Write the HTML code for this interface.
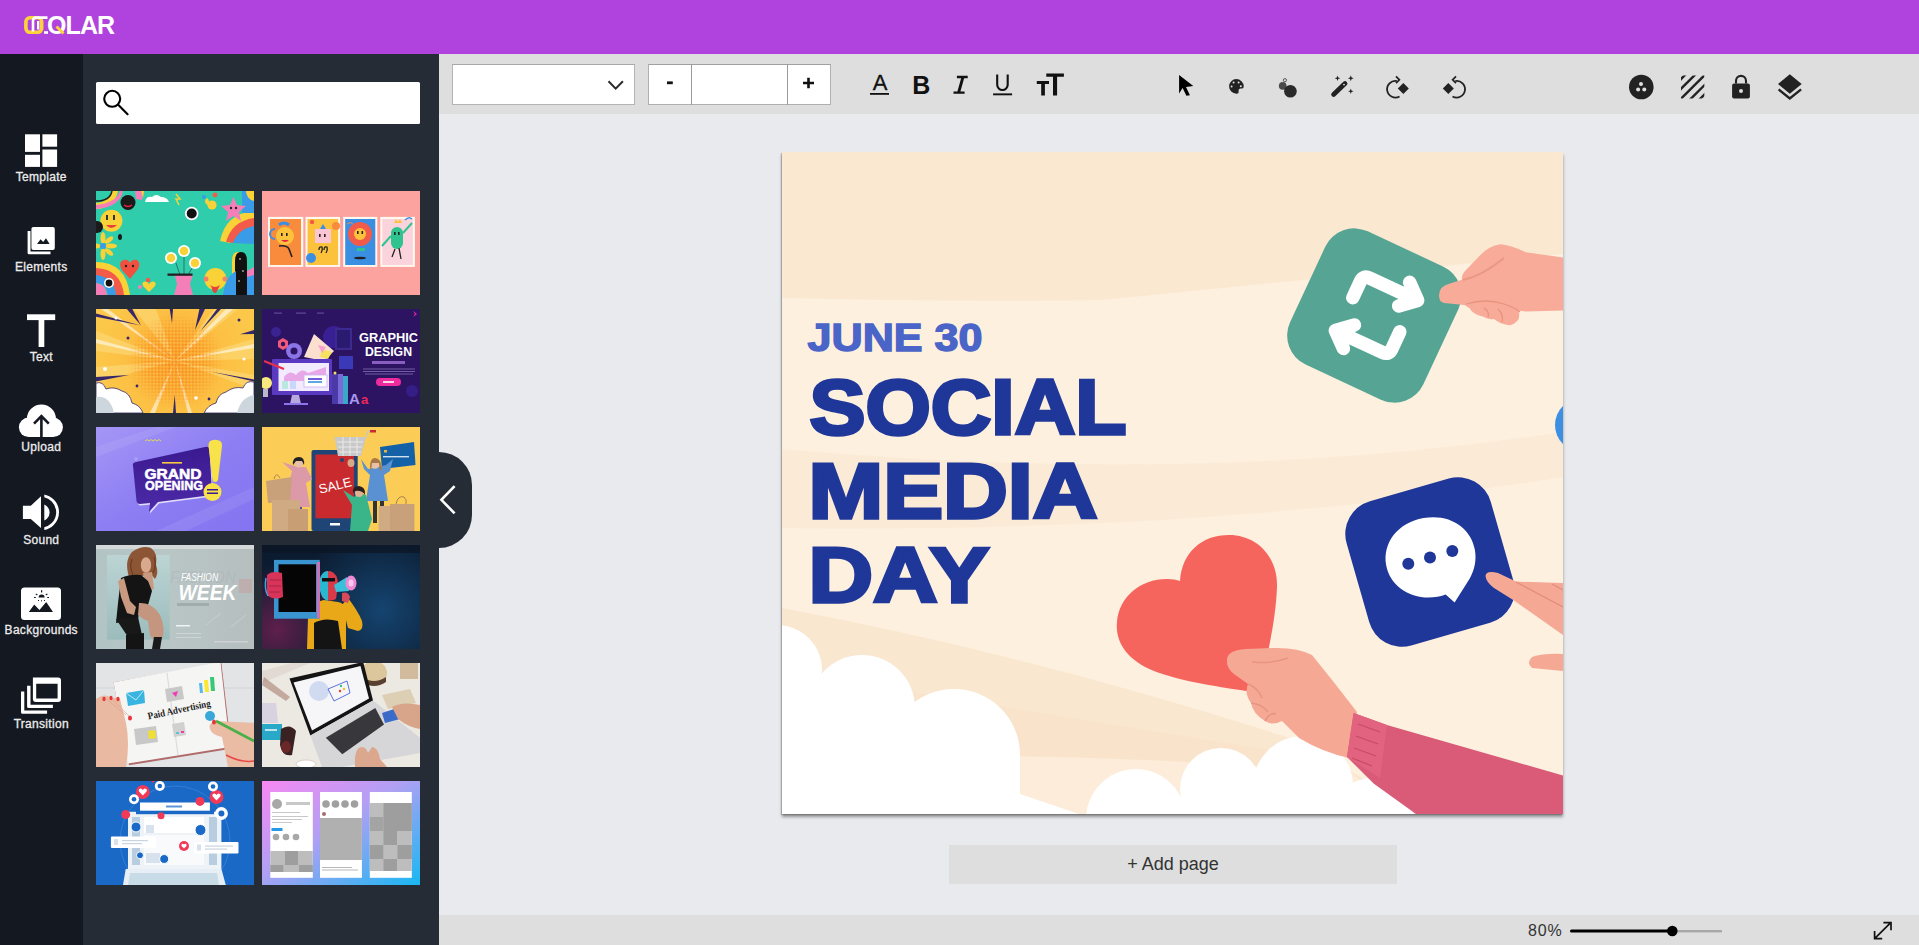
<!DOCTYPE html>
<html><head><meta charset="utf-8">
<style>
*{box-sizing:border-box;margin:0;padding:0}
html,body{width:1919px;height:945px;overflow:hidden;background:#e9eaee;font-family:"Liberation Sans",sans-serif}
.abs{position:absolute}
#hdr{left:0;top:0;width:1919px;height:54px;background:#b043de}
#side{left:0;top:54px;width:83px;height:891px;background:#141820}
#panel{left:83px;top:54px;width:356px;height:891px;background:#262c35}
#tool{left:439px;top:54px;width:1480px;height:60px;background:#dedede}
#bot{left:439px;top:915px;width:1480px;height:30px;background:#dedede}
.lbl{position:absolute;color:#ececec;-webkit-text-stroke:0.3px #ececec;font-size:12px;letter-spacing:0.3px;width:82.5px;text-align:center;left:0;line-height:14px}
#search{left:96px;top:82px;width:324px;height:42px;background:#fff;border-radius:1.5px}
.th{position:absolute;width:158px;height:104px;overflow:hidden}
#tab{left:439px;top:452px;width:33px;height:96px;background:#262c35;border-radius:0 33px 33px 0}
#canvas{left:782px;top:152px;width:781px;height:662px;background:#fae8d2;overflow:hidden;box-shadow:-1px 1px 1px rgba(0,0,0,.18),0 3px 3px rgba(0,0,0,.38)}
#addp{left:949px;top:845px;width:448px;height:39px;background:#dedede;color:#333;font-size:18px;text-align:center;line-height:39px}
</style></head><body>
<div id="hdr" class="abs"></div>
<div id="side" class="abs"></div>
<svg class="abs" style="left:20px;top:10px" width="100" height="30" viewBox="0 0 100 30">
<rect x="5.9" y="7.8" width="15.8" height="14.5" rx="4" ry="4" fill="none" stroke="#fcd33a" stroke-width="3.6"/>
<path d="M13 21.5 V10.5 Q13 7.6 16 7.6 H27.5" fill="none" stroke="#fff" stroke-width="2.6"/>
<path d="M18.2 11 V19.5" fill="none" stroke="#fff" stroke-width="2.4"/>
<rect x="24" y="21.2" width="4" height="2.6" fill="#fff"/>
</svg>
<div class="abs" id="logotxt" style="left:47px;top:11px;font-size:25px;font-weight:bold;color:#fff;line-height:28px;letter-spacing:-0.9px">OLAR</div>
<svg class="abs" style="left:55px;top:25px" width="12" height="10"><path d="M1.5 1.5 L8.5 8.5" stroke="#fcd33a" stroke-width="2.8"/></svg>

<div id="panel" class="abs"></div>
<div id="tool" class="abs"></div>
<div id="bot" class="abs"></div>
<div class="abs" style="left:452px;top:64px;width:183px;height:41px;background:#fff;border:1px solid #b4b4b4;border-top-color:#a8a8a8"></div>
<div class="abs" style="left:648px;top:64px;width:183px;height:41px;background:#fff;border:1px solid #b0b0b0;border-top-color:#a0a0a0"></div>
<div class="abs" style="left:691px;top:64px;width:1px;height:41px;background:#9a9a9a"></div>
<div class="abs" style="left:787px;top:64px;width:1px;height:41px;background:#9a9a9a"></div>
<svg class="abs" style="left:439px;top:54px" width="1480" height="60" viewBox="439 54 1480 60">
<path d="M608.5 81.2 L615.7 88.6 L622.9 81.2" fill="none" stroke="#2a2a2a" stroke-width="2"/>
<rect x="667" y="81.4" width="5.8" height="2.8" fill="#111"/>
<path d="M803 83 H814 M808.5 77.7 V88.3" stroke="#111" stroke-width="2.6"/>
<text x="872.8" y="89.6" font-family="Liberation Sans" font-size="22" fill="#111" stroke="#111" stroke-width="0.3">A</text>
<rect x="870" y="93" width="19" height="1.8" fill="#111"/>
<text x="912.3" y="93.8" font-family="Liberation Sans" font-weight="bold" font-size="25" fill="#111">B</text>
<path d="M956.9 75.8 H967.7 V78.2 H956.9 Z M953.5 91.4 H964.6 V93.7 H953.5 Z M961.2 78 L964.2 78 L960.4 91.6 L957.4 91.6 Z" fill="#111"/>
<path d="M997.2 74.4 V84.8 A5.25 5.25 0 0 0 1007.7 84.8 V74.4" fill="none" stroke="#111" stroke-width="2.1"/>
<rect x="993.1" y="93.4" width="19" height="1.9" fill="#111"/>
<path d="M1036.8 80.9 H1049 V83.9 H1044.9 V95.4 H1041.2 V83.9 H1036.8 Z" fill="#111"/>
<path d="M1046.3 73.4 H1063.9 V76.8 H1057.1 V95.4 H1053 V76.8 H1046.3 Z" fill="#111"/>
<path d="M1179.1 74.9 L1193.3 85.9 L1186 87.1 L1189.9 95.2 L1186.4 95.8 L1182.6 88 L1179.1 93.5 Z" fill="#000"/>
<g fill="#222">
<path d="M1236.4 79.1 A7.3 7.3 0 0 0 1236.4 93.7 Q1239 93.7 1238.6 91.2 Q1238.3 88.5 1241 88.6 L1242.2 88.6 Q1243.7 88.6 1243.7 86.2 A7.3 7.3 0 0 0 1236.4 79.1 Z"/>
</g>
<g fill="#dedede"><circle cx="1233.6" cy="82.6" r="1"/><circle cx="1238.6" cy="82.4" r="1"/><circle cx="1231.6" cy="86.6" r="1"/><circle cx="1240.8" cy="86.2" r="1"/></g>
<circle cx="1282.7" cy="85.9" r="3.8" fill="#4a4a4a"/>
<circle cx="1284.9" cy="80.2" r="1.6" fill="none" stroke="#555" stroke-width="1"/>
<circle cx="1290.4" cy="91.3" r="6.3" fill="#2a2a2a"/>
<path d="M1333.6 94.4 L1345 83.6" stroke="#222" stroke-width="4.8" stroke-linecap="round"/>
<circle cx="1344" cy="84.6" r="0.9" fill="#dedede"/>
<g fill="#222">
<path d="M1337.5 75.4 L1338.2 77.5 L1340.3 78.2 L1338.2 78.9 L1337.5 81 L1336.8 78.9 L1334.7 78.2 L1336.8 77.5 Z"/>
<path d="M1350.8 75.2 L1351.6 77.4 L1353.8 78.2 L1351.6 79 L1350.8 81.2 L1350 79 L1347.8 78.2 L1350 77.4 Z"/>
<path d="M1350.8 88.6 L1351.5 90.6 L1353.5 91.3 L1351.5 92 L1350.8 94 L1350.1 92 L1348.1 91.3 L1350.1 90.6 Z"/>
</g>
<path d="M1396.84 81.08 A8.3 8.3 0 1 0 1399.55 96.44" fill="none" stroke="#222" stroke-width="1.8"/>
<path d="M1396 76.4 L1399.4 79.8 L1396 83.2" fill="none" stroke="#222" stroke-width="1.7"/>
<path d="M1403.3 82.9 L1408.8 88.4 L1403.3 93.9 L1397.8 88.4 Z" fill="#222"/>
<path d="M1455.26 81.08 A8.3 8.3 0 1 1 1452.55 96.44" fill="none" stroke="#222" stroke-width="1.8"/>
<path d="M1456 76.4 L1452.6 79.8 L1456 83.2" fill="none" stroke="#222" stroke-width="1.7"/>
<path d="M1448.3 82.9 L1453.8 88.4 L1448.3 93.9 L1442.8 88.4 Z" fill="#222"/>
<circle cx="1641.3" cy="87" r="12.3" fill="#222"/>
<g fill="#dedede"><circle cx="1641" cy="84.1" r="2"/><circle cx="1638.1" cy="89.6" r="2"/><circle cx="1644.3" cy="89.6" r="2"/></g>
<clipPath id="stc"><rect x="1681" y="75.5" width="23.3" height="22.9"/></clipPath>
<g clip-path="url(#stc)" stroke="#222" stroke-width="2.4">
<path d="M1670 90 L1690 70"/><path d="M1670 99.8 L1700 69.8"/><path d="M1670 109.7 L1710 69.7"/><path d="M1680 109.6 L1710 79.6"/><path d="M1690 109 L1710 89"/>
</g>
<path d="M1736 83.5 V80.9 A5 5 0 0 1 1746 80.9 V83.5" fill="none" stroke="#222" stroke-width="2.1"/>
<rect x="1732.1" y="83.5" width="17.8" height="14.9" rx="2" fill="#222"/>
<circle cx="1741" cy="91" r="2" fill="#dedede"/>
<path d="M1789.8 74.3 L1801.7 84.1 L1789.8 93.8 L1778 84.1 Z" fill="#222"/>
<path d="M1778.6 89.4 L1789.8 98.4 L1801.1 89.4" fill="none" stroke="#222" stroke-width="2.4"/>
</svg>

<div id="search" class="abs"></div>

<svg class="abs" style="left:0;top:0" width="83" height="945" viewBox="0 0 83 945">
<g fill="#fff">
<rect x="25" y="134.3" width="15" height="17.6"/>
<rect x="25" y="154.8" width="15" height="12.1"/>
<rect x="42.4" y="134.3" width="14.7" height="12.4"/>
<rect x="42.4" y="149.5" width="14.7" height="17.4"/>
<rect x="31.4" y="227" width="23.4" height="23" rx="2"/>
<path d="M27.6 231 H30.5 V251.4 H50.5 V254.3 H29 Q27.6 254.3 27.6 252.9 Z"/>
<rect x="27" y="314.3" width="28.2" height="5.8"/>
<rect x="38.6" y="319" width="5.7" height="28"/>
<circle cx="41.4" cy="419" r="14.6"/>
<circle cx="28.6" cy="427.3" r="9.7"/>
<circle cx="53.2" cy="427.3" r="9.7"/>
<rect x="28.6" y="420" width="24.6" height="17"/>
<path d="M22.9 505.7 H30.8 L41 496.2 V528.1 L30.8 519 H22.9 Z"/>
<rect x="21" y="587.6" width="40" height="32.4" rx="3.5"/>
<path d="M32.9 677.6 H58 Q61 677.6 61 680.6 V698.9 Q61 701.9 58 701.9 H35.9 Q32.9 701.9 32.9 698.9 Z M36.2 683.8 V698.6 H57.6 V683.8 Z" fill-rule="evenodd"/>
<path d="M27.1 685.7 H30.5 V704.8 H52.9 V708.1 H28.6 Q27.1 708.1 27.1 706.6 Z"/>
<path d="M21 691.4 H24.3 V710.5 H47.1 V713.8 H22.5 Q21 713.8 21 712.3 Z"/>
</g>
<path d="M37 244 L40.6 239.3 L43.2 242 L46 238.2 L49.6 244 Z" fill="#141820"/>
<path d="M41.4 438 V417.5 M34 423.6 L41.4 416.2 L48.8 423.6" stroke="#141820" stroke-width="2.6" fill="none" stroke-linejoin="miter"/>
<clipPath id="wv"><rect x="44.3" y="480" width="30" height="60"/></clipPath>
<g clip-path="url(#wv)" fill="#fff">
<circle cx="41" cy="512.5" r="8.6"/>
<circle cx="41" cy="512.3" r="16.6" fill="none" stroke="#fff" stroke-width="2.8"/>
</g>
<g fill="#141820">
<path d="M29 612 L34.3 604.8 L39.5 612 Z"/>
<path d="M37.8 612 L46.2 601.9 L53 612 Z"/>
<path d="M29 612 L34.3 604.8 L41.5 612 Z"/>
<path d="M38.6 597.4 A3 3 0 0 1 44.6 597.4 Z"/>
<rect x="41" y="590.2" width="1.2" height="2.2"/>
<rect x="35.6" y="593.9" width="2" height="1.1" transform="rotate(35 36.6 594.4)"/>
<rect x="45.6" y="593.9" width="2" height="1.1" transform="rotate(-35 46.6 594.4)"/>
<rect x="34" y="597" width="1.8" height="1"/>
<rect x="47.2" y="597" width="1.8" height="1"/>
<rect x="38" y="600" width="1" height="1"/>
<rect x="41" y="600.3" width="1" height="1"/>
<rect x="44" y="600" width="1" height="1"/>
</g>
</svg>
<div class="lbl" style="top:169.8px">Template</div>
<div class="lbl" style="top:259.8px">Elements</div>
<div class="lbl" style="top:350.2px">Text</div>
<div class="lbl" style="top:439.8px">Upload</div>
<div class="lbl" style="top:532.8px">Sound</div>
<div class="lbl" style="top:622.6px">Backgrounds</div>
<div class="lbl" style="top:716.8px">Transition</div>
<svg class="abs" style="left:96px;top:82px" width="40" height="42"><circle cx="16.2" cy="16.8" r="8" fill="none" stroke="#000" stroke-width="2.1"/><path d="M22.2 22.8 L31.6 32.2" stroke="#000" stroke-width="2.1" stroke-linecap="round"/></svg>
<div class="th" style="left:96px;top:191px"><svg width="158" height="104" viewBox="0 0 158 104">
<rect width="158" height="104" fill="#2fcdab"/>
<path d="M0 0 H22 A22 22 0 0 1 0 18 Z" fill="#f9d237"/>
<path d="M0 0 H16 A16 16 0 0 1 0 12 Z" fill="#2fcdab"/>
<path d="M0 14 Q20 12 24 0 H27 Q24 16 0 18 Z" fill="#f47fb8"/>
<path d="M0 10 Q14 10 16 0" stroke="#1a1a1a" stroke-width="1.4" fill="none"/>
<circle cx="32" cy="11.5" r="7.5" fill="#1a1a1a"/><path d="M28 14 Q32 17 36 14" stroke="#e24" stroke-width="1.5" fill="none"/>
<path d="M39 0 L48 0 L46 9 L40 8 Z" fill="#f47fb8"/><path d="M45 0 L48 0 L47 7 Z" fill="#f9d237"/>
<path d="M49 11 Q50 5 56 6 Q60 2 65 6 Q71 6 73 11 Z" fill="#fff"/>
<path d="M80 3 L84 8 L80 8 L83 14" stroke="#f9d237" stroke-width="1.5" fill="none"/>
<path d="M111 14 q-4 -4 0 -7 q4 3 0 7" fill="#f9d237"/><circle cx="116" cy="14" r="4.6" fill="#f9d237"/>
<circle cx="108" cy="6" r="2" fill="#3a9be8"/><circle cx="119" cy="4" r="2.4" fill="#f25a4a"/>
<circle cx="95.7" cy="22.5" r="6.8" fill="#fff"/><circle cx="95.7" cy="22.5" r="5" fill="#111"/>
<circle cx="15.4" cy="29.7" r="11" fill="#f9d237"/><path d="M10 34 Q15 40 21 34 Z" fill="#e8403a"/><rect x="10" y="24" width="2" height="5" fill="#333"/><rect x="17" y="24" width="2" height="5" fill="#333"/>
<circle cx="1" cy="36" r="6" fill="#1a1a1a"/>
<ellipse cx="24" cy="46" rx="2" ry="3" fill="#1a1a1a"/>
<g fill="#f9d237"><ellipse cx="7" cy="47" rx="2.5" ry="6"/><ellipse cx="7" cy="63" rx="2.5" ry="6"/><ellipse cx="-1" cy="55" rx="6" ry="2.5"/><ellipse cx="15" cy="55" rx="6" ry="2.5"/><ellipse cx="13" cy="49" rx="5" ry="2.3" transform="rotate(-40 13 49)"/><ellipse cx="13" cy="61" rx="5" ry="2.3" transform="rotate(40 13 61)"/></g><circle cx="7" cy="55" r="3" fill="#3a9be8"/>
<path d="M158 20 Q130 22 124 50 L134 52 Q140 32 158 30 Z" fill="#f9d237"/>
<path d="M158 27 Q136 30 130 51 L138 52 Q143 38 158 36 Z" fill="#f25a4a"/>
<path d="M158 35 Q142 38 137 52 L158 53 Z" fill="#3a9be8"/>
<rect x="146" y="0" width="12" height="22" fill="#3a9be8"/>
<path d="M150 0 A10 10 0 0 0 158 10 V0 Z" fill="#f9d237"/>
<path d="M137.5 6 L141 14 L150 15 L143 21 L145 30 L137.5 25 L130 30 L132 21 L125 15 L134 14 Z" fill="#f47fb8"/>
<circle cx="135" cy="17" r="1.2" fill="#222"/><circle cx="140" cy="17" r="1.2" fill="#222"/>
<path d="M0 71 Q30 71 34 104 H22 Q20 82 0 82 Z" fill="#f9d237"/>
<path d="M0 77 Q25 78 28 104 H20 Q18 86 0 86 Z" fill="#f25a4a"/>
<path d="M0 84 Q18 86 20 104 H12 Q10 92 0 92 Z" fill="#3a9be8"/>
<path d="M0 92 Q10 93 11 104 H0 Z" fill="#f47fb8"/>
<circle cx="13" cy="92" r="5" fill="#fff"/><circle cx="13" cy="92" r="3.4" fill="#111"/>
<path d="M34 88 L25 78 Q22 70 28 69 Q32 68 34 72 Q36 68 41 69 Q45 72 42 78 Z" fill="#f2503f"/>
<circle cx="30" cy="75" r="1.2" fill="#222"/><circle cx="37" cy="75" r="1.2" fill="#222"/>
<path d="M53 101 L47 95 Q45 91 49 90.5 Q52 90 53 93 Q55 90 57 90.5 Q61 91 59 95 Z" fill="#f9d237"/>
<circle cx="52" cy="89" r="2.2" fill="#f25a4a"/><circle cx="44" cy="96" r="2" fill="#f47fb8"/>
<path d="M80 72 L84 84 M88 62 L88 84 M99 72 L92 84" stroke="#333" stroke-width="0.6"/>
<circle cx="75" cy="67" r="6" fill="#fff"/><circle cx="75" cy="67" r="4.3" fill="#f9d237"/>
<circle cx="88" cy="60" r="6" fill="#fff"/><circle cx="88" cy="60" r="4.3" fill="#f9d237"/>
<circle cx="99" cy="72" r="6" fill="#fff"/><circle cx="99" cy="72" r="4.3" fill="#f9d237"/>
<path d="M78.7 84 H96.8 L94 93 L97 104 H78 L81 93 Z" fill="#f47fb8"/><rect x="71.5" y="82.5" width="25" height="2.3" fill="#222"/>
<circle cx="119.4" cy="88" r="11" fill="#f9d237"/><circle cx="110" cy="88" r="2.5" fill="#f47f6a"/><circle cx="129" cy="88" r="2.5" fill="#f47f6a"/><path d="M114 94 Q119 98 124 94 L120 102 Q116 102 116 97 Z" fill="#e8403a"/>
<path d="M136 104 V70 Q136 61 142 61 Q150 61 150.7 70 V104 Z" fill="#f9d237"/>
<path d="M139 104 V70 Q139 61 145 61 Q151 61 151 70 V104 Z" fill="#111"/>
<circle cx="144" cy="68" r="0.8" fill="#fff"/><circle cx="147" cy="80" r="0.8" fill="#fff"/><circle cx="143" cy="90" r="0.8" fill="#fff"/>
<path d="M151 80 Q158 76 158 76 V104 H151 Z" fill="#f47fb8"/><path d="M151 86 L158 84 V104 H151 Z" fill="#3a9be8"/>
<path d="M127 104 Q130 85 140 80 L140 104 Z" fill="#3a9be8"/>
</svg></div>

<div class="th" style="left:262px;top:191px"><svg width="158" height="104" viewBox="0 0 158 104">
<rect width="158" height="104" fill="#fca39f"/>
<g fill="#fff8ef"><rect x="6" y="25.9" width="35.3" height="50"/><rect x="43.5" y="25.9" width="34.6" height="50"/><rect x="81.2" y="25.9" width="34.1" height="50"/><rect x="118.3" y="25.9" width="34.6" height="50"/></g>
<rect x="8" y="28" width="31" height="46" fill="#f98c3c"/>
<rect x="45.5" y="28" width="30.6" height="46" fill="#fcc23c"/>
<rect x="83.2" y="28" width="30.1" height="46" fill="#3b8fe3"/>
<rect x="120.3" y="28" width="30.6" height="46" fill="#fbd3dc"/>
<path d="M13 38 A5 5 0 1 0 13 48" stroke="#3b8fe3" stroke-width="2" fill="none"/>
<circle cx="23" cy="45" r="9" fill="#fcc23c"/><rect x="19" y="42" width="1.6" height="3" fill="#222"/><rect x="24" y="42" width="1.6" height="3" fill="#222"/><path d="M19 49 Q23 53 27 49" fill="#e24"/>
<path d="M17 55 Q25 54 27 58 L30 66" stroke="#222" stroke-width="1.6" fill="none"/>
<path d="M17 34 Q22 30 27 34" stroke="#3b8fe3" stroke-width="3" fill="none"/>
<circle cx="50" cy="31" r="2.2" fill="#f25a4a"/><circle cx="74" cy="35" r="4" fill="#f98c3c"/><circle cx="49" cy="67" r="5" fill="#3b8fe3"/>
<rect x="53" y="38" width="16" height="14" fill="#fbc6d4"/><rect x="57" y="43" width="1.6" height="3" fill="#222"/><rect x="62" y="43" width="1.6" height="3" fill="#222"/>
<path d="M57 59 Q57 55 60 56 Q61 59 59 62 M62 59 Q62 55 65 56 Q66 59 64 62" stroke="#222" stroke-width="1.3" fill="none"/>
<path d="M58 38 L61 33 L64 38 Z" fill="#3b8fe3"/>
<g fill="#f25a4a"><circle cx="98" cy="43" r="12"/></g>
<circle cx="98" cy="43" r="6" fill="#fcc23c"/><rect x="95" y="40" width="1.6" height="3" fill="#222"/><rect x="99.5" y="40" width="1.6" height="3" fill="#222"/>
<rect x="95" y="57" width="8" height="3" fill="#2ec38f"/><ellipse cx="98" cy="67" rx="6" ry="1.3" fill="#222"/>
<path d="M85 33 Q88 30 91 33" stroke="#f98c3c" stroke-width="1" fill="none"/>
<rect x="129" y="36" width="12" height="22" rx="6" fill="#2ec38f"/><path d="M141 42 L150 32" stroke="#2ec38f" stroke-width="2"/><path d="M129 45 L120 55" stroke="#2ec38f" stroke-width="2"/>
<rect x="132" y="41" width="1.6" height="3" fill="#222"/><rect x="136" y="41" width="1.6" height="3" fill="#222"/>
<path d="M132 32 L134 28 L136 31 L138 28 L140 32 Z" fill="#fcc23c"/>
<path d="M133 58 L130 66 M137 57 L139 68" stroke="#222" stroke-width="1.3"/>
<path d="M143 29 Q147 25 150 28" stroke="#3b8fe3" stroke-width="1.5" fill="none"/>
</svg></div>

<div class="th" style="left:96px;top:309px"><svg width="158" height="104" viewBox="0 0 158 104">
<defs><radialGradient id="g3" cx="79" cy="50" r="80" gradientUnits="userSpaceOnUse"><stop offset="0" stop-color="#fbb03a"/><stop offset="0.5" stop-color="#fcbd42"/><stop offset="1" stop-color="#fcc84a"/></radialGradient>
<pattern id="dots" width="3.4" height="3.4" patternUnits="userSpaceOnUse"><circle cx="1.7" cy="1.7" r="1.25" fill="#f7871c"/></pattern>
<radialGradient id="fade3" cx="79" cy="52" r="48" gradientUnits="userSpaceOnUse"><stop offset="0" stop-color="#fff" stop-opacity="1"/><stop offset="0.6" stop-color="#fff" stop-opacity="0.7"/><stop offset="1" stop-color="#fff" stop-opacity="0"/></radialGradient>
<mask id="m3"><rect width="158" height="104" fill="url(#fade3)"/></mask></defs>
<rect width="158" height="104" fill="url(#g3)"/>
<g fill="#fdd670" opacity="0.75">
<path d="M79 52 L0 22 L0 42 Z"/><path d="M79 52 L38 0 L60 0 Z"/><path d="M79 52 L118 0 L142 0 Z"/><path d="M79 52 L158 30 L158 50 Z"/><path d="M79 52 L0 58 L0 74 Z"/><path d="M79 52 L158 66 L158 80 Z"/>
</g>
<g fill="#fff" opacity="0.55">
<path d="M79 52 L0 30 L0 34 Z"/><path d="M79 52 L158 35 L158 39 Z"/><path d="M79 52 L130 0 L137 0 Z"/><path d="M79 52 L5 0 L12 0 Z"/><path d="M79 52 L54 104 L59 104 Z"/><path d="M79 52 L92 104 L96 104 Z"/>
</g>
<rect width="158" height="104" fill="url(#dots)" mask="url(#m3)"/>
<g fill="#35286a">
<path d="M0 4.4 L0 7.7 L45 16.5 Z"/><path d="M30.8 0 L36.3 0 L45 16.5 Z"/><path d="M73.7 0 L77 0 L76 14.3 Z"/><path d="M103.4 0 L109 0 L99 20.9 Z"/><path d="M158 21 L158 25 L144 25.3 Z"/><path d="M0 68 L0 72.6 L33 66 Z"/><path d="M158 70.4 L158 72.6 L115.5 62.7 Z"/><path d="M77 104 L80 104 L78.7 85.8 Z"/><path d="M121 0 L125 0 L104.5 22 Z"/>
</g>
<path d="M0 74 Q7 72 10 80 Q18 77 26 82 Q34 84 36 94 Q44 96 47 104 H0 Z" fill="#fff" stroke="#35286a" stroke-width="0.8"/>
<path d="M0 88 Q14 86 18 104 H0 Z" fill="#cdd6dc"/>
<path d="M158 73 Q150 71 147 79 Q138 77 130 83 Q122 85 120 94 Q112 96 108 104 H158 Z" fill="#fff" stroke="#35286a" stroke-width="0.8"/>
<path d="M158 86 Q145 88 141 104 H158 Z" fill="#cdd6dc"/>
<circle cx="20" cy="9" r="1.5" fill="#fff"/><circle cx="32" cy="29" r="1.5" fill="#35286a"/><circle cx="143" cy="11" r="1.5" fill="#35286a"/><circle cx="148" cy="50" r="1.6" fill="#fff"/><circle cx="9" cy="60" r="2" fill="#fff"/><circle cx="100" cy="89" r="1.8" fill="#fff"/><circle cx="41" cy="77" r="1.4" fill="#35286a"/><circle cx="113" cy="90" r="1.4" fill="#35286a"/>
</svg></div>

<div class="th" style="left:262px;top:309px"><svg width="158" height="104" viewBox="0 0 158 104">
<rect width="158" height="104" fill="#2c1463"/>
<circle cx="72" cy="28" r="11" fill="#3d22a0" opacity="0.8"/><rect x="74" y="20" width="15" height="20" fill="#2a1a70" stroke="#3d2a90" stroke-width="2"/>
<circle cx="14" cy="23" r="5" fill="#3a2290"/>
<path d="M16 32 L21 29 L26 32 L26 38 L21 41 L16 38 Z" fill="#f25878"/><circle cx="21" cy="35" r="2.2" fill="#2c1463"/>
<circle cx="32" cy="42" r="8" fill="#8b74e8"/><circle cx="32" cy="42" r="3.5" fill="#2c1463"/>
<path d="M42 48 L52 25 L72 42 L62 52 Z" fill="#fbe0d0"/><path d="M60 40 L70 43 L66 50 L58 48 Z" fill="#f8e060"/><path d="M56 36 L64 38 L60 44 Z" fill="#f8a0d0"/>
<rect x="77" y="47" width="14" height="13" fill="#3a3ab8"/>
<rect x="10" y="50" width="60" height="36" rx="1" fill="#5a3ac0"/>
<rect x="16.5" y="54" width="50.5" height="28" fill="#f2eaff"/>
<path d="M22 68 Q28 60 34 66 Q40 58 46 64 L64 58 V72 H22 Z" fill="#e8a8e8"/>
<rect x="42" y="66" width="23" height="12" fill="#fff" stroke="#c8b0f0" stroke-width="0.8"/><rect x="46" y="69" width="14" height="2" fill="#7060e0"/><rect x="46" y="72" width="14" height="2" fill="#60a8e0"/>
<rect x="20" y="72" width="6" height="8" fill="#b8e8e0"/><rect x="28" y="72" width="6" height="8" fill="#c8d8f8"/>
<path d="M30 86 L37 86 L39 95 L28 95 Z" fill="#b8a8e0"/><rect x="22" y="94" width="24" height="2" fill="#8b74e8"/>
<path d="M2 52 L22 60" stroke="#e8304a" stroke-width="2.2"/>
<circle cx="4" cy="74" r="6" fill="#f8e880"/><rect x="1" y="80" width="5" height="8" fill="#b8b8c8"/>
<rect x="70" y="65" width="6" height="30" fill="#4a3aa8"/><rect x="76" y="65" width="5" height="30" fill="#7a6ad8"/><rect x="81" y="67" width="5" height="28" fill="#3aa8c8"/>
<text x="87" y="95" font-family="Liberation Sans" font-weight="bold" font-size="15" fill="#a898f0">A</text><text x="99" y="95" font-family="Liberation Sans" font-weight="bold" font-size="13" fill="#f02858">a</text>
<circle cx="73" cy="64" r="1.5" fill="#f8e060"/>
<text x="126.5" y="32.5" text-anchor="middle" font-family="Liberation Sans" font-weight="bold" font-size="13.2" fill="#fff" textLength="59" lengthAdjust="spacingAndGlyphs">GRAPHIC</text>
<text x="126.5" y="47.3" text-anchor="middle" font-family="Liberation Sans" font-weight="bold" font-size="13.2" fill="#fff" textLength="47" lengthAdjust="spacingAndGlyphs">DESIGN</text>
<rect x="110" y="52" width="33" height="3" fill="#a070d8" opacity="0.8"/>
<rect x="101" y="59.5" width="52" height="1" fill="#a090d0" opacity="0.6"/><rect x="101" y="62" width="52" height="1" fill="#a090d0" opacity="0.6"/><rect x="103" y="64.5" width="48" height="1" fill="#a090d0" opacity="0.6"/>
<rect x="114" y="69" width="25" height="8" rx="4" fill="#ef2a9c"/><rect x="121" y="72" width="11" height="2" fill="#fff" opacity="0.8"/>
<path d="M151 2 L155 5 L151 8 L153 5 Z" fill="#ef2a9c"/>
<rect x="12" y="3.5" width="8" height="1.2" fill="#8070c0" opacity="0.6"/><rect x="34" y="3.5" width="10" height="1.2" fill="#8070c0" opacity="0.6"/><rect x="55" y="3.5" width="7" height="1.2" fill="#8070c0" opacity="0.6"/>
<circle cx="150" cy="82" r="6" fill="#3a2090" opacity="0.8"/>
</svg></div>

<div class="th" style="left:96px;top:427px"><svg width="158" height="104" viewBox="0 0 158 104">
<defs><linearGradient id="g5" x1="0" y1="0" x2="1" y2="1"><stop offset="0" stop-color="#a496f6"/><stop offset="0.5" stop-color="#8d7ef3"/><stop offset="1" stop-color="#8474f0"/></linearGradient>
<linearGradient id="b5" x1="0" y1="0" x2="0" y2="1"><stop offset="0" stop-color="#3a1a90"/><stop offset="1" stop-color="#4d2aa8"/></linearGradient></defs>
<rect width="158" height="104" fill="url(#g5)"/>
<path d="M0 20 L60 0 H80 L0 30 Z" fill="#fff" opacity="0.08"/><path d="M60 104 L158 60 V72 L90 104 Z" fill="#fff" opacity="0.08"/>
<path d="M37 39 Q36 36 40 35 L109 20 Q113 19 113.5 23 L116 65 Q116 68 112 68.5 L62 75 L53 85 L54 76 L44 77 Q41 77 40.5 74 Z" fill="#e0dcf8" transform="translate(1 1.5)"/>
<path d="M37 39 Q36 36 40 35 L109 20 Q113 19 113.5 23 L116 65 Q116 68 112 68.5 L62 75 L53 85 L54 76 L44 77 Q41 77 40.5 74 Z" fill="url(#b5)"/>
<text x="77" y="51.7" text-anchor="middle" font-family="Liberation Sans" font-weight="bold" font-size="15.5" fill="#fff" stroke="#fff" stroke-width="0.6" textLength="57" lengthAdjust="spacingAndGlyphs">GRAND</text>
<text x="78" y="62.6" text-anchor="middle" font-family="Liberation Sans" font-weight="bold" font-size="13.5" fill="#fff" stroke="#fff" stroke-width="0.5" textLength="58" lengthAdjust="spacingAndGlyphs">OPENING</text>
<rect x="66" y="35" width="20" height="1.6" fill="#f8c840"/>
<path d="M112.5 19 Q112 12.7 119 12.7 Q126.5 12.7 126 19 L122 53 Q121.5 55 119 55 Q117 55 116.5 53 Z" fill="#f8e24a"/>
<circle cx="116.5" cy="65" r="9" fill="#f8e24a"/><rect x="111" y="62" width="11" height="1.5" fill="#3a1a90"/><rect x="111" y="65.5" width="11" height="1.5" fill="#3a1a90"/>
<path d="M49 14 l2 -1.5 l2 1.5 l2 -1.5 l2 1.5 l2 -1.5 l2 1.5 l2 -1.5 l2 1.5" stroke="#e8e040" stroke-width="0.9" fill="none"/>
<circle cx="40" cy="32" r="1.2" fill="none" stroke="#c8c0f8" stroke-width="0.6"/><circle cx="98" cy="32" r="1.4" fill="none" stroke="#3a1a90" stroke-width="0.6"/>
</svg></div>

<div class="th" style="left:262px;top:427px"><svg width="158" height="104" viewBox="0 0 158 104">
<rect width="158" height="104" fill="#fbcd56"/>
<rect x="49.5" y="23" width="46.2" height="81" rx="2" fill="#1f4577"/>
<rect x="53.4" y="27.5" width="38.5" height="63.8" fill="#c92a2e"/>
<rect x="68" y="96" width="10" height="2.5" fill="#fff"/><circle cx="80" cy="33" r="2" fill="#1f4577"/>
<text x="73" y="63" text-anchor="middle" font-family="Liberation Sans" font-size="13" fill="#fff" transform="rotate(-14 73 58)">SALE</text>
<path d="M72.6 10 H104 L99 29 H76 Z" fill="#c8c8c8"/><path d="M75 15 H101 M76 20 H100 M77 25 H99 M81 10 V29 M88 10 V29 M95 10 V29" stroke="#f0f0f0" stroke-width="0.8"/>
<path d="M104 10 L106 4 H114" stroke="#c8c8c8" stroke-width="1.3" fill="none"/><rect x="108" y="3" width="6" height="2.5" fill="#c92a2e"/>
<path d="M118 20 L152 15 L153.5 38 L120 42 Z" fill="#1461a8"/><rect x="122" y="23" width="3" height="2.5" fill="#e8b840"/><rect x="121" y="29" width="26" height="1.4" fill="#fff" opacity="0.8"/>
<ellipse cx="89" cy="36" rx="3.5" ry="4" fill="#d8a888"/>
<path d="M20 35 L30 44 L26 60 L24 80 H48 L44 56 L50 52 L44 40 L36 40 Z" fill="#dc9aa8"/>
<circle cx="37" cy="36" r="4.5" fill="#e8c0a8"/><path d="M31 38 Q30 30 37 30 Q43 30 42 38 L40 34 L34 34 Z" fill="#222"/>
<rect x="33" y="80" width="7" height="10" fill="#4a5a80"/>
<path d="M4 54 L30 50 L28 74 L6 76 Z" fill="#c8a07a"/><path d="M12 52 Q14 44 18 51" stroke="#a07850" stroke-width="0.8" fill="none"/>
<rect x="10" y="73" width="28" height="31" fill="#d0aa82"/><rect x="26" y="82" width="20" height="22" fill="#c89e74"/>
<path d="M99 32 L106 42 L116 40 L124 38 L131 32 L128 44 L122 48 L126 74 H104 L108 48 L102 42 Z" fill="#5a91d2"/>
<circle cx="113" cy="38" r="3.8" fill="#e8c0a8"/><path d="M108 40 Q108 31 113 31 Q119 31 120 42 L118 44 L117 36 L110 36 L109 44 Z" fill="#a87848"/>
<rect x="111" y="74" width="4" height="22" fill="#333"/><rect x="118" y="74" width="4" height="22" fill="#333"/>
<path d="M81 63 L92 70 L96 66 L104 68 L110 92 L106 104 H88 L90 78 Z" fill="#3ab58a"/>
<circle cx="97" cy="66" r="4" fill="#e0b090"/><path d="M91 66 Q90 59 97 59 Q104 60 103 68 Q100 63 93 64 Z" fill="#2a2020"/>
<rect x="116.6" y="79" width="20" height="25" fill="#d0aa82"/><rect x="128" y="77" width="24.4" height="27" fill="#c8a07a"/><path d="M134 77 Q136 68 142 70 Q145 72 144 77" stroke="#a07850" stroke-width="0.9" fill="none"/>
</svg></div>

<div class="th" style="left:96px;top:545px"><svg width="158" height="104" viewBox="0 0 158 104">
<defs><linearGradient id="g7" x1="0" y1="0" x2="1" y2="0"><stop offset="0" stop-color="#b2c4c4"/><stop offset="0.45" stop-color="#b9c6c6"/><stop offset="1" stop-color="#b6bebe"/></linearGradient>
<linearGradient id="g7b" x1="0" y1="0" x2="0" y2="1"><stop offset="0" stop-color="#bcd4d4"/><stop offset="1" stop-color="#9cbcbc"/></linearGradient></defs>
<rect width="158" height="104" fill="url(#g7)"/>
<rect x="0" y="0" width="158" height="4" fill="#d4d8d8"/>
<rect x="11" y="10" width="62.7" height="84.6" fill="url(#g7b)"/>
<text x="74" y="38" font-family="Liberation Sans" font-style="italic" font-size="17" fill="#a9b3b3" opacity="0.45" textLength="66" lengthAdjust="spacingAndGlyphs">FASHION</text>
<rect x="143" y="34" width="13" height="14" fill="#c89898" opacity="0.45"/>
<path d="M33 32 Q28 16 36 7 Q46 0 55 3 Q62 8 60 20 Q63 28 59 34 L54 28 L42 33 Z" fill="#8c5636"/>
<path d="M36 14 Q33 22 37 30 M58 12 Q61 20 57 28" stroke="#6a3c22" stroke-width="1.2" fill="none"/>
<ellipse cx="50" cy="20" rx="5.2" ry="7.8" fill="#d9a98e"/>
<path d="M47 28 L56 27 L58 44 L50 47 Z" fill="#c99a80"/>
<path d="M25 33 Q34 29 45 30 L52 36 L56 46 L52 60 L44 62 L42 74 L20 78 L22 58 Z" fill="#141414"/>
<path d="M22 36 L28 33 L34 56 L40 62 L38 70 L31 68 L25 52 Z" fill="#c99a80"/>
<path d="M43 58 Q56 57 64 70 Q70 84 66 94 Q58 98 54 90 L52 76 Q46 74 42 70 Z" fill="#c49680"/>
<path d="M20 74 L42 72 L46 90 L32 92 Z" fill="#181818"/>
<path d="M30 90 L48 88 L48 104 H30 Z" fill="#141414"/>
<path d="M58 92 L66 92 L64 104 H56 Z" fill="#1a1a1a"/>
<text x="85" y="36" font-family="Liberation Sans" font-style="italic" font-size="10" fill="#fff" textLength="37" lengthAdjust="spacingAndGlyphs">FASHION</text>
<text x="82.5" y="55" font-family="Liberation Sans" font-style="italic" font-weight="bold" font-size="22" fill="#fff" textLength="58" lengthAdjust="spacingAndGlyphs">WEEK</text>
<rect x="81" y="58" width="32" height="3" fill="#9aa6a6" opacity="0.8"/>
<rect x="80" y="80" width="14" height="1.5" fill="#fff" opacity="0.8"/><rect x="80" y="88" width="25" height="1" fill="#ddd" opacity="0.6"/><rect x="80" y="92" width="25" height="1" fill="#ddd" opacity="0.6"/>
<rect x="118" y="96" width="34" height="1.5" fill="#ddd" opacity="0.6"/>
<path d="M110 80 L125 68 M135 82 L150 70" stroke="#d0d6d6" stroke-width="0.6"/>
</svg></div>

<div class="th" style="left:262px;top:545px"><svg width="158" height="104" viewBox="0 0 158 104">
<defs><radialGradient id="g8a" cx="15" cy="85" r="65" gradientUnits="userSpaceOnUse"><stop offset="0" stop-color="#5e1f4c"/><stop offset="1" stop-color="#5e1f4c" stop-opacity="0"/></radialGradient>
<radialGradient id="g8b" cx="120" cy="65" r="85" gradientUnits="userSpaceOnUse"><stop offset="0" stop-color="#154470"/><stop offset="1" stop-color="#0c1c30"/></radialGradient></defs>
<rect width="158" height="104" fill="url(#g8b)"/>
<rect width="158" height="104" fill="url(#g8a)"/>
<rect x="0" y="0" width="158" height="8" fill="#0c1220" opacity="0.6"/>
<path d="M45 104 L46 72 Q50 57 62 55 L76 57 Q82 58 84 64 L84 104 Z" fill="#e8a818"/>
<path d="M80 60 L86 53 Q96 66 100 76 Q102 85 96 86 L86 83 Z" fill="#e8a818"/>
<path d="M52 104 V78 Q62 72 76 76 L80 104 Z" fill="#141414"/>
<path d="M58 34 Q60 26 68 26 Q76 28 76 40 L74 54 Q66 58 60 52 Z" fill="#d83a4a"/>
<path d="M58 34 Q60 26 66 26 L66 56 Q60 54 58 46 Z" fill="#2ab8d0"/>
<rect x="60" y="33" width="13" height="3.5" fill="#111"/>
<path d="M72 40 L85 32 L87 46 L74 47 Z" fill="#3ac0d8"/>
<ellipse cx="89" cy="38" rx="5.5" ry="7.5" fill="#ea8ad2"/><ellipse cx="89" cy="38" rx="2.5" ry="3.5" fill="#f8c8f0"/>
<path d="M80 48 Q86 46 88 52 L86 58 L80 56 Z" fill="#d84a5a"/>
<rect x="12" y="14.9" width="45.8" height="58.8" fill="#3a94d0"/>
<rect x="55" y="17" width="3" height="56" fill="#d070b0"/>
<rect x="16.5" y="19.3" width="37.5" height="47.7" fill="#050505"/>
<path d="M5 30 Q10 25 20 28 L21 52 Q12 56 5 50 Z" fill="#d8345a"/>
<path d="M8 35 H19 M7 41 H19 M7 47 H18" stroke="#a02040" stroke-width="0.8"/>
<path d="M4 33 Q2 44 6 51" stroke="#3aa8e0" stroke-width="1.5" fill="none"/>
</svg></div>

<div class="th" style="left:96px;top:663px"><svg width="158" height="104" viewBox="0 0 158 104">
<rect width="158" height="104" fill="#e2e4e6"/>
<path d="M0 25 H158 M0 60 H158" stroke="#cfd2d4" stroke-width="0.8"/>
<path d="M17.6 19.3 L125.4 0 L135.3 85.8 L33 102.3 Z" fill="#b06a6a"/>
<path d="M17.6 19.3 L124.5 -1 L134 84 L32 100.5 Z" fill="#f5f5f3"/>
<path d="M71 10 L82 92" stroke="#dcdcdc" stroke-width="1.2"/>
<path d="M30 30 L48 27 L49 40 L32 43 Z" fill="#38b4e0"/><path d="M30 30 L40 37 L48 27" stroke="#fff" stroke-width="0.7" fill="none"/>
<path d="M69 26 L86 23 L88 36 L71 39 Z" fill="#c8c8c8"/><path d="M76 30 L80 34 L82 28 Z" fill="#f03cb0"/>
<path d="M103 20 L106 20 L107 30 L104 30 Z" fill="#58b8e8"/><path d="M108 17 L112 17 L113 29 L109 29 Z" fill="#f8e830"/><path d="M114 14 L118 14 L119 28 L115 28 Z" fill="#3ac878"/>
<path d="M38 66 L60 63 L62 79 L40 82 Z" fill="#c8c8c8"/><path d="M52 68 L59 67 L60 75 L53 76 Z" fill="#f0e030"/>
<path d="M76 61 L88 59 L90 72 L78 74 Z" fill="#d0d0d0"/><rect x="80" y="69" width="3" height="2" fill="#58c8c8"/><rect x="85" y="68" width="3" height="2" fill="#f03cb0"/>
<circle cx="114" cy="53" r="5" fill="#38a8d8"/>
<text x="83" y="50" text-anchor="middle" font-family="Liberation Serif" font-weight="bold" font-size="10" fill="#222" transform="rotate(-12 83 46)" textLength="64" lengthAdjust="spacingAndGlyphs">Paid Advertising</text>
<path d="M0 36 Q8 30 14 34 L16 35 Q22 34 24 36 L30 60 Q34 80 30 104 H0 Z" fill="#e9b9a1"/>
<path d="M8 34 L30 52 M14 34 L34 54" stroke="#d8a088" stroke-width="0.6"/>
<ellipse cx="8" cy="36" rx="1.6" ry="2.2" fill="#e8343a"/><ellipse cx="15" cy="35" rx="1.6" ry="2.2" fill="#e8343a"/><ellipse cx="22" cy="36" rx="1.6" ry="2.2" fill="#e8343a"/><ellipse cx="34" cy="55" rx="2" ry="2.6" fill="#e8343a"/>
<path d="M158 60 L120 58 Q112 60 114 66 Q116 72 126 74 L132 104 H158 Z" fill="#ebbca4"/>
<ellipse cx="118" cy="59" rx="2" ry="2.5" fill="#e8343a"/>
<path d="M120 58 L158 78" stroke="#48b048" stroke-width="2.8"/>
<path d="M130 92 Q145 100 158 98" stroke="#e84848" stroke-width="1.5" fill="none"/>
</svg></div>

<div class="th" style="left:262px;top:663px"><svg width="158" height="104" viewBox="0 0 158 104">
<rect width="158" height="104" fill="#ece8e2"/>
<path d="M0 8 L30 0 H48 L0 20 Z" fill="#d8d0c8" opacity="0.6"/><path d="M2 14 L28 34 L24 38 L0 22 Z" fill="#9a6a5a" opacity="0.5"/>
<path d="M0 40 L14 40 L16 60 L0 60 Z" fill="#d0c8e0" opacity="0.7"/>
<ellipse cx="112" cy="10" rx="13" ry="12" fill="#dcc69c"/><path d="M100 14 Q112 22 124 14 L124 19 Q112 27 100 19 Z" fill="#5a4030"/>
<rect x="138" y="0" width="18" height="16" fill="#c8a880" opacity="0.7"/>
<path d="M120 32 L148 26 L154 40 L126 46 Z" fill="#d8c8a8" opacity="0.8"/>
<path d="M27.5 15.4 L101.2 -1 L111 37.4 L48.4 72.6 Z" fill="#141414"/>
<path d="M31.5 19.5 L98.5 3 L107 35.5 L50 67.5 Z" fill="#f6f6f8"/>
<circle cx="57" cy="28" r="10" fill="#d0daf0"/>
<path d="M66 26 L85 18 L88 30 L72 38 Z" fill="none" stroke="#5a70e0" stroke-width="1"/><circle cx="79" cy="23" r="1.2" fill="#3ac878"/><circle cx="82" cy="26" r="1.2" fill="#f0c020"/><circle cx="78" cy="28" r="1.2" fill="#e83838"/>
<path d="M48.4 72.6 L111 37.4 L158 74.8 L158 90 L80 104 L60 104 Z" fill="#d6d6d8"/>
<path d="M63.8 74.8 L113.3 45 L122 61.6 L80.3 91.3 Z" fill="#38383c"/>
<path d="M120 50 L135 45 L138 56 L123 60 Z" fill="#3a6bc8"/>
<path d="M130 44 Q140 38 158 42 V66 Q146 64 136 56 Z" fill="#d9a58a"/>
<path d="M93 104 Q92 84 100 84 Q104 84 106 90 L110 84 Q116 84 118 96 L125 104 Z" fill="#dba88e"/>
<rect x="0" y="61" width="20" height="16" fill="#2aa8c8"/><rect x="3" y="66" width="12" height="2" fill="#fff" opacity="0.7"/>
<path d="M19 66 Q28 60 34 68 L30 92 Q20 94 18 82 Z" fill="#3a2222"/><ellipse cx="24" cy="84" rx="5" ry="6" fill="#6a2828"/>
<ellipse cx="44" cy="101" rx="10" ry="4" fill="#fff" stroke="#d0c8c0" stroke-width="0.8"/>
</svg></div>

<div class="th" style="left:96px;top:781px"><svg width="158" height="104" viewBox="0 0 158 104">
<rect width="158" height="104" fill="#1a69c6"/>
<circle cx="79" cy="60" r="55" fill="none" stroke="#4a8ad8" stroke-width="0.6"/>
<path d="M29.7 88 H125.4 L129.8 104 H27 Z" fill="#e8eef5"/><path d="M34 92 H121 L123 104 H32 Z" fill="#c8dce8"/>
<rect x="32" y="30.8" width="93.4" height="57.2" fill="#eef3f8"/>
<rect x="36" y="36" width="8" height="48" fill="#b8cee0"/><rect x="113" y="36" width="8" height="48" fill="#b8cee0"/>
<rect x="48" y="36" width="60" height="16" fill="#fff"/><rect x="50" y="44" width="8" height="8" fill="#d8e2ee"/>
<rect x="48" y="54" width="60" height="30" fill="#f8fafc"/><rect x="50" y="72" width="14" height="10" fill="#d8e2ee"/>
<rect x="40" y="29.7" width="78" height="3.5" fill="#1a69c6"/>
<rect x="44" y="21.5" width="69.9" height="8.2" fill="#fff"/><rect x="70" y="24.5" width="16" height="2" fill="#1a69c6" opacity="0.7"/>
<rect x="14.9" y="55.5" width="45" height="11.6" rx="1" fill="#fff"/><rect x="18" y="58" width="4" height="6" fill="#d8e2ee"/><rect x="26" y="59" width="26" height="1.2" fill="#c8d4e0"/><rect x="26" y="62" width="20" height="1.2" fill="#c8d4e0"/>
<rect x="98" y="61" width="44.5" height="11.6" rx="1" fill="#fff"/><rect x="101" y="63.5" width="4" height="6" fill="#d8e2ee"/><rect x="109" y="64.5" width="28" height="1.2" fill="#c8d4e0"/><rect x="109" y="67.5" width="22" height="1.2" fill="#c8d4e0"/>
<g fill="#f03a58"><circle cx="46.8" cy="11" r="7"/><circle cx="120.5" cy="16" r="7"/><circle cx="104" cy="20.4" r="4.5"/><circle cx="29.7" cy="33.6" r="4.5"/><circle cx="65" cy="34.7" r="3.5"/><circle cx="88" cy="65" r="5"/><circle cx="57" cy="0" r="1.5"/></g>
<g fill="#fff"><path d="M46.8 14.5 L43 10.5 Q42 8 44.5 7.5 Q46 7.5 46.8 9 Q47.6 7.5 49 7.5 Q51.6 8 50.6 10.5 Z"/><path d="M120.5 19.5 L116.7 15.5 Q115.7 13 118.2 12.5 Q119.7 12.5 120.5 14 Q121.3 12.5 122.7 12.5 Q125.3 13 124.3 15.5 Z"/><path d="M88 67.5 L85.5 65 Q85 63 86.6 62.7 Q87.6 62.7 88 63.6 Q88.4 62.7 89.4 62.7 Q91 63 90.5 65 Z"/></g>
<g fill="#fff"><circle cx="63.8" cy="5" r="5"/><circle cx="38" cy="18.2" r="5"/><circle cx="117" cy="5.5" r="5"/><circle cx="125.4" cy="32.5" r="6.5"/></g>
<g fill="#1a69c6"><circle cx="63.8" cy="5" r="2.3"/><circle cx="38" cy="18.2" r="2.3"/><circle cx="117" cy="5.5" r="2.3"/><circle cx="125.4" cy="32.5" r="3"/></g>
<g fill="#1a69c6" stroke="#fff" stroke-width="1"><circle cx="40" cy="46" r="5"/><circle cx="104.5" cy="49" r="5.5"/><circle cx="44" cy="74.3" r="3.5"/><circle cx="68.2" cy="78" r="4.5"/></g>
</svg></div>

<div class="th" style="left:262px;top:781px"><svg width="158" height="104" viewBox="0 0 158 104">
<defs><linearGradient id="g12" x1="0" y1="0" x2="1" y2="1"><stop offset="0" stop-color="#f888f2"/><stop offset="0.45" stop-color="#b0a0f4"/><stop offset="1" stop-color="#18b8f2"/></linearGradient></defs>
<rect width="158" height="104" fill="url(#g12)"/>
<rect x="8.3" y="11" width="42.5" height="85.8" fill="#fff"/>
<rect x="58" y="11" width="41.9" height="85.8" fill="#fff"/>
<rect x="107.8" y="11" width="42" height="85.8" fill="#fff"/>
<circle cx="15" cy="23" r="5" fill="#a8a8a8"/><rect x="24" y="21" width="24" height="3" fill="#c8c8c8"/>
<rect x="10" y="31" width="28" height="1" fill="#c8c8c8"/><rect x="10" y="35" width="36" height="1" fill="#c8c8c8"/><rect x="10" y="38" width="30" height="1" fill="#c8c8c8"/><rect x="10" y="41" width="20" height="1" fill="#c8c8c8"/>
<rect x="9.5" y="47" width="11" height="3" fill="#2898e8"/>
<circle cx="14" cy="56" r="3.3" fill="#a8a8a8"/><circle cx="24" cy="56" r="3.3" fill="#a8a8a8"/><circle cx="34" cy="56" r="3.3" fill="#a8a8a8"/>
<rect x="8.3" y="70" width="42.5" height="21" fill="#bdbdbd"/><rect x="23" y="70" width="13" height="14" fill="#9e9e9e"/><rect x="8.3" y="84" width="13" height="7" fill="#9e9e9e"/><rect x="37" y="84" width="13.8" height="7" fill="#9e9e9e"/>
<circle cx="64" cy="23" r="3.8" fill="#a0a0a0"/><circle cx="73.5" cy="23" r="3.8" fill="#a0a0a0"/><circle cx="83" cy="23" r="3.8" fill="#a0a0a0"/><circle cx="92.5" cy="23" r="3.8" fill="#a0a0a0"/>
<circle cx="62" cy="33" r="2" fill="#a07070"/><rect x="58" y="37" width="41.9" height="42" fill="#b0b0b0"/>
<rect x="60" y="86" width="30" height="1" fill="#b8b8b8"/><rect x="60" y="88.5" width="36" height="1" fill="#b8b8b8"/>
<rect x="107.8" y="22" width="42" height="68" fill="#bdbdbd"/><rect x="121.5" y="22" width="28.3" height="28" fill="#9e9e9e"/><rect x="107.8" y="36" width="13.5" height="14" fill="#a4a4a4"/><rect x="121.5" y="50" width="13.5" height="14" fill="#9e9e9e"/><rect x="107.8" y="64" width="13.5" height="14" fill="#9e9e9e"/><rect x="135.5" y="64" width="14.3" height="14" fill="#9e9e9e"/><rect x="121.5" y="78" width="13.5" height="12" fill="#9e9e9e"/>
</svg></div>

<div id="tab" class="abs"></div>
<div id="canvas" class="abs">
<svg width="781" height="662" viewBox="0 0 781 662" style="position:absolute;left:0;top:0">
<rect width="781" height="662" fill="#fdf0df"/>
<path d="M0 0 H781 V102 Q560 124 320 148 Q160 150 0 146 Z" fill="#fae8d1"/>
<path d="M0 297 Q420 335 781 280 V325 Q420 382 0 376 Z" fill="#fbead5"/>
<path d="M0 456 Q260 505 520 590 L640 662 H0 Z" fill="#fae7cf"/>
<path d="M0 520 Q260 560 500 600 L560 662 H0 Z" fill="#f9e4cb"/>
<path d="M220 604 Q400 606 570 622 L620 662 H220 Z" fill="#fcecd9"/>
<g fill="#fff">
<circle cx="-5" cy="518" r="45"/>
<circle cx="80" cy="556" r="53"/>
<circle cx="172" cy="603" r="66"/>
<path d="M-5 518 L80 556 L172 603 L238 603 L238 642 L297 662 H0 Z"/>
<circle cx="354" cy="667" r="50"/>
<circle cx="439" cy="637" r="41"/>
<circle cx="521" cy="634" r="50"/>
<rect x="354" y="648" width="250" height="14"/><circle cx="590" cy="668" r="42"/>
</g>
<circle cx="800" cy="273" r="27" fill="#3d8fe2"/>
<g transform="translate(592.3 163.5) rotate(25)">
<rect x="-73.5" y="-73.5" width="147" height="147" rx="32" fill="#56a594"/>
<path d="M-27 -7 V-25 Q-27 -32 -20 -32 H31 M18 -45 L33 -32 L18 -19" fill="none" stroke="#fff" stroke-width="13.5" stroke-linecap="round" stroke-linejoin="round"/>
<path d="M30 4 V23 Q30 30 23 30 H-27 M-14 17 L-29 30 L-14 43" fill="none" stroke="#fff" stroke-width="13.5" stroke-linecap="round" stroke-linejoin="round"/>
</g>
<path d="M657 143.6 Q657 134 668 131.5 L680 127.7 Q679 123 684 118 L696 105.5 Q706 94 718.4 92.3 Q728 93 743.8 100.2 L781 105.5 V158.4 L743.8 159.5 L736.4 158.4 Q740 170 728 173.2 Q718 172 712 166.9 Q706 168 701.5 164.8 Q690 162 687.7 156.3 L682.4 153.1 L662 151 Q657 150 657 143.6 Z" fill="#f7ab98"/>
<path d="M684 152 Q704 146 722 152 Q734 156 738 160 M702 156 Q708 160 706 165 M716 157 Q722 163 720 170" fill="none" stroke="#e8937f" stroke-width="1.3"/>
<path d="M681 128 Q700 124 722 106" fill="none" stroke="#ea9883" stroke-width="2"/>
<g transform="translate(648 410) rotate(-16)">
<rect x="-75" y="-75" width="150" height="150" rx="34" fill="#1e3799"/>
</g>
<path d="M648.5 365.4 C 622 365.4, 603.5 383, 603.5 405.4 C 603.5 428, 624 445.4, 648.5 445.4 Q 652 445.4 657 444.6 L664.4 454 L683.5 433 C 690 425, 693.5 416, 693.5 405.4 C 693.5 383, 675 365.4, 648.5 365.4 Z" fill="#fff" transform="rotate(-10 648.5 405.4)"/>
<g fill="#1e3799"><circle cx="626.3" cy="411.7" r="6"/><circle cx="648" cy="405.4" r="6"/><circle cx="670.3" cy="399" r="6"/></g>
<path d="M781 431 L734 429.6 L716 421 Q704 418 703.5 424 Q704 430 712 436 L732 448.6 L781 483 Z" fill="#f5a995"/>
<path d="M734 430 L781 455 M770 432 L781 438" stroke="#e48d7a" stroke-width="1.4"/>
<path d="M781 502 Q762 501 750 505 Q744 511 750 516 L781 519 Z" fill="#f5a995"/>
<path d="M470 540 C 440 535, 400 530, 372 519 C 345 508, 333 490, 335 470 C 337 445, 358 427, 385 427 Q 393 427, 398 429 C 400 400, 420 383, 447 383 C 475 383, 496 405, 495 435 C 494 460, 490 480, 486 500 C 482 518, 478 532, 470 540 Z" fill="#f6645e"/>
<path d="M445 507 Q446 498 464 497 L490 496 Q515 495 530 503 Q552 530 575 560 L567 606 Q540 600 517 586 L500 569 Q490 574 483 569 Q471 562 469 551 Q462 541 466 532 L452 522 Q444 516 445 507 Z" fill="#f5a995"/>
<path d="M466 532 Q476 536 480 546 M469 551 Q480 552 486 560 M483 569 Q488 560 494 562" fill="none" stroke="#e89482" stroke-width="1.6"/>
<path d="M470 510 Q490 512 506 506" fill="none" stroke="#e89482" stroke-width="1.5"/>
<path d="M571.6 561 L604.9 573 L781 623.5 V662 H634 L591.6 631.5 L565 605 Z" fill="#d95b78"/>
<path d="M571.6 561 L604.9 573 L598 626 L565 605 Z" fill="#e2637f"/>
<path d="M576 572 L598 580 M574 584 L596 592 M572 596 L594 604 M570 606 L590 614" stroke="#c94a68" stroke-width="1.3"/>
<text x="25.5" y="198.8" font-family="Liberation Sans" font-weight="bold" font-size="39.5" fill="#4a64c8" stroke="#4a64c8" stroke-width="1.4" stroke-linejoin="miter" textLength="175" lengthAdjust="spacingAndGlyphs">JUNE 30</text>
<text x="27.5" y="282" font-family="Liberation Sans" font-weight="bold" font-size="77" fill="#1e3799" stroke="#1e3799" stroke-width="3.4" stroke-linejoin="miter" textLength="317" lengthAdjust="spacingAndGlyphs">SOCIAL</text>
<text x="26.5" y="365.5" font-family="Liberation Sans" font-weight="bold" font-size="77" fill="#1e3799" stroke="#1e3799" stroke-width="3.4" stroke-linejoin="miter" textLength="289" lengthAdjust="spacingAndGlyphs">MEDIA</text>
<text x="26.5" y="449.8" font-family="Liberation Sans" font-weight="bold" font-size="77" fill="#1e3799" stroke="#1e3799" stroke-width="3.4" stroke-linejoin="miter" textLength="180.5" lengthAdjust="spacingAndGlyphs">DAY</text>
</svg>
</div>
<div id="addp" class="abs">+ Add page</div>
<div class="abs" style="left:1528px;top:922px;font-size:16px;line-height:18px;color:#333;letter-spacing:0.8px">80%</div>
<svg class="abs" style="left:1560px;top:915px" width="359" height="30" viewBox="1560 915 359 30">
<rect x="1570" y="929.6" width="102" height="3" rx="1.5" fill="#000"/>
<rect x="1672" y="930" width="50" height="2.4" fill="#a8a8a8"/>
<circle cx="1672.3" cy="931" r="5.3" fill="#000"/>
<path d="M1874.6 938.6 L1891 922.4 M1883.4 922.6 H1891 V930.2 M1874.6 931 V938.6 H1882.2" fill="none" stroke="#111" stroke-width="1.7"/>
</svg>
<svg class="abs" style="left:439px;top:452px" width="33" height="96" viewBox="439 452 33 96"><path d="M454.6 486.2 L441.4 499.8 L454.6 513.4" fill="none" stroke="#fff" stroke-width="2.6"/></svg>

</body></html>
